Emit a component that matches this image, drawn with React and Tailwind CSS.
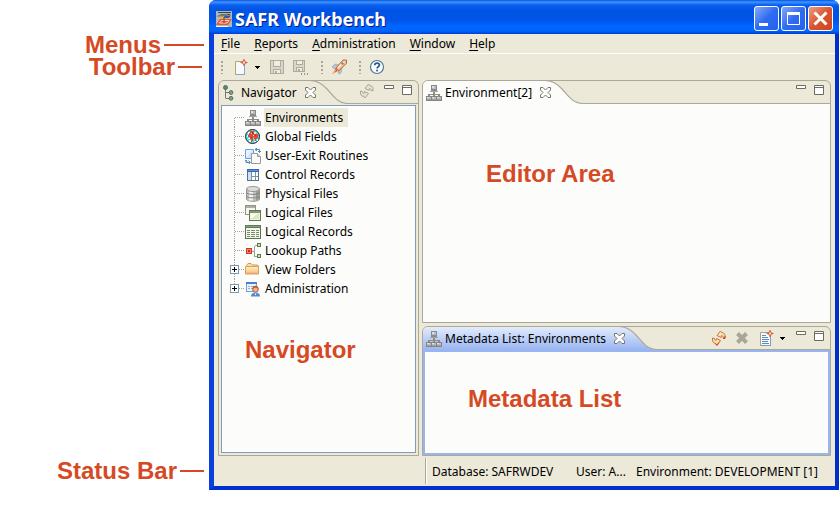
import React from "react";

const UI = "font-['Noto_Sans','DejaVu_Sans',sans-serif] text-[12px] leading-[19px] text-black";
const NOTE = "font-['Liberation_Sans',Arial,sans-serif] text-[24px] leading-[22px] font-bold text-[#d54a25]";

function Svg({ children, className = "", w = 16, h = 16 }) {
  return (
    <svg width={w} height={h} viewBox={`0 0 ${w} ${h}`} className={`block shrink-0 ${className}`} fill="none" aria-hidden="true">
      {children}
    </svg>
  );
}

/* ---------- icons ---------- */

const AppIcon = () => (
  <Svg>
    <rect width="16" height="16" fill="#b4b5ba" />
    <path d="M2 1.500h13M5 3.500h9" stroke="#3f434a" />
    <path d="M0 5.500l4-2 9-1-3 3z" fill="#6f7f73" />
    <path d="M2 7.500l10-3M3 9l12-4" stroke="#e8b93c" />
    <path d="M9 4.500h6l-2 2.500H7z" fill="#35599c" />
    <path d="M0 14l4-6h12l-4 6z" fill="#e25a33" />
    <path d="M3.500 12l2-2.500h7.500l-2 2.500z" stroke="#fbd7c5" />
    <path d="M8 7v5" stroke="#a8231a" />
    <path d="M0 15.500h12" stroke="#f6f6f6" />
  </Svg>
);

const NetworkIcon = () => (
  <Svg>
    <g shapeRendering="crispEdges">
      <rect x="5" y="0" width="6" height="6" fill="#8b8b86" />
      <rect x="6" y="1" width="4" height="3" fill="#b7bbcd" />
      <rect x="6" y="1" width="2" height="2" fill="#d9dcea" />
      <rect x="4" y="6" width="8" height="1" fill="#a3a29c" />
      <rect x="7" y="7" width="2" height="2" fill="#8d8d86" />
      <rect x="2" y="9" width="12" height="1" fill="#8d8d86" />
      <path d="M2 10h2v1H2zM7 10h2v1H7zM12 10h2v1h-2z" fill="#8d8d86" />
      <rect x="0" y="11" width="16" height="5" fill="#85857f" />
      <path d="M1 12h4v2H1zM6 12h4v2H6zM11 12h4v2h-4z" fill="#bcbcbe" />
      <path d="M1 12h2v1H1zM6 12h2v1H6zM11 12h2v1h-2z" fill="#e2e2e4" />
      <path d="M1 14h4v1H1zM6 14h4v1H6zM11 14h4v1h-4z" fill="#a2a29e" />
    </g>
  </Svg>
);

const GlobeIcon = () => (
  <Svg>
    <circle cx="7.500" cy="7.500" r="7" fill="#54d8ea" stroke="#222" />
    <g shapeRendering="crispEdges">
      <path d="M3 3h2v2H3zM2 6h1v2H2zM3 9h2v1H3zM4 11h2v2H4zM9 12h2v1H9zM12 10h1v2h-1zM10 10h1v1h-1z" fill="#e6fdff" />
      <path d="M5 2h4v1h2v2h2v4h-1v1h-1v2h-1v-2H9V8H8v4H7v1H6v-3H5V8H3V6h1V4h1z" fill="#e2482c" />
      <path d="M9 3h2v2H9zM6 4h1v1H6zM8 6h1v1H8z" fill="#ffd4c2" />
      <path d="M7 3h1v2H7zM10 6h1v1h-1zM6 8h1v1H6z" fill="#9b2a20" />
    </g>
  </Svg>
);

const RoutineIcon = () => (
  <Svg>
    <path d="M.500 1.500h8v9h-8z" fill="#cfe3ff" stroke="#6f9ddd" />
    <path d="M1 2h6l-5 7H1z" fill="#e9f3ff" />
    <path d="M6.500 5.500h6l3 3v7h-9z" fill="#fafafa" stroke="#9b9b94" />
    <path d="M12.500 5.500v3h3" stroke="#9b9b94" fill="#ddd" />
    <path d="M10 1.500h4.500V4M12 0l-2 1.500L12 3M13 3l1.500 1.500L16 3" stroke="#4f88b5" />
    <path d="M1 12.500v2h4M3.500 12.500L5.500 14.500l-2 1.500M-.5 13.500l1.500-1.500 1.500 1.500" stroke="#4f88b5" />
  </Svg>
);

const ControlIcon = () => (
  <Svg>
    <g shapeRendering="crispEdges">
      <rect x="2.500" y="2.500" width="11" height="11" fill="#fff" stroke="#56728f" />
      <rect x="2" y="2" width="12" height="3" fill="#3569c0" />
      <rect x="3" y="3" width="10" height="1" fill="#5f8fdc" />
      <path d="M3 5h3v8H3z" fill="#cfe0f6" />
      <path d="M6.500 5v8M10.500 5v8" stroke="#7d93a0" />
      <path d="M7 9.500h6" stroke="#7d93a0" />
    </g>
  </Svg>
);

const DatabaseIcon = () => (
  <Svg>
    <path d="M1.500 3v10c0 3 13 3 13 0V3" fill="#c0c0be" stroke="#96968f" />
    <path d="M4 4v10.500h4V5z" fill="#f0f0ee" />
    <path d="M11 4v10.500l3-1V3z" fill="#9c9c97" />
    <path d="M1.500 6.500c0 2.500 13 2.500 13 0M1.500 10c0 2.500 13 2.500 13 0" stroke="#83837e" />
    <ellipse cx="8" cy="3" rx="6.500" ry="2.500" fill="#dcdcda" stroke="#96968f" />
  </Svg>
);

const LogicalFilesIcon = () => (
  <Svg>
    <g shapeRendering="crispEdges">
      <rect x=".5" y=".5" width="10" height="9" fill="#f5f6ef" stroke="#8f948a" />
      <path d="M1 1h9v2H1z" fill="#a9b19f" />
      <rect x="4.500" y="5.500" width="11" height="10" fill="#eef3df" stroke="#66785b" />
      <path d="M5 6h10v2H5z" fill="#7f9a6c" />
      <path d="M6 9h8v5H6z" fill="#dbe8c2" />
      <path d="M6 9h6v1h-2v1H9v1H8v1H6z" fill="#fafdf2" />
    </g>
  </Svg>
);

const LogicalRecordsIcon = () => (
  <Svg>
    <g shapeRendering="crispEdges">
      <rect x=".5" y="1.500" width="15" height="13" fill="#f4f7ec" stroke="#5d7158" />
      <path d="M0 1h16v3H0z" fill="#5f7a5c" />
      <path d="M1 2h14v1H1z" fill="#84a07d" />
      <path d="M2 6.500h3M6 6.500h4M11 6.500h3M2 8.500h3M6 8.500h4M11 8.500h3M2 10.500h3M6 10.500h4M11 10.500h3M2 12.500h3M6 12.500h4M11 12.500h3" stroke="#7a8c66" />
    </g>
  </Svg>
);

const LookupIcon = () => (
  <Svg>
    <g shapeRendering="crispEdges">
      <rect x="1.500" y="5.500" width="5" height="5" fill="#f08868" stroke="#cc3a24" />
      <rect x="3" y="7" width="2" height="2" fill="#c52a1c" />
      <path d="M7 8.500h3M9.500 3v11M10 2.500h2M10 13.500h2" stroke="#a0a09a" />
      <rect x="12.500" y=".5" width="3" height="3" fill="#cfe0b8" stroke="#5e7a4c" />
      <rect x="12.500" y="11.500" width="3" height="3" fill="#cfe0b8" stroke="#5e7a4c" />
    </g>
  </Svg>
);

const FolderIcon = () => (
  <Svg>
    <defs>
      <linearGradient id="folder" x1="0" y1="0" x2="0" y2="1">
        <stop offset="0" stopColor="#fdeebc" />
        <stop offset=".6" stopColor="#f9d596" />
        <stop offset="1" stopColor="#f2a07a" />
      </linearGradient>
    </defs>
    <path d="M1.500 11.500v-8l1.500-2h3l1.500 1.500h5l1 1v7.500z" fill="#f8dfa0" stroke="#c99c55" />
    <path d="M.500 4.500h13v7.500h-13z" fill="url(#folder)" stroke="#d2a266" />
  </Svg>
);

const AdminIcon = () => (
  <Svg>
    <g shapeRendering="crispEdges">
      <rect x="1.500" y="1.500" width="10" height="9" fill="#eaf2fd" stroke="#7ba3da" />
      <path d="M1 1h11v2H1z" fill="#4b80cd" />
      <path d="M3 5.500h2M6 5.500h3M3 7.500h2M6 7.500h2" stroke="#8db1e2" />
    </g>
    <path d="M6 15.500c0-3 2-4 4.500-4s4.500 1 4.500 4z" fill="#4a8bd4" />
    <path d="M9.500 12.500l1 2 1-2z" fill="#fff" />
    <circle cx="10.500" cy="8.500" r="2.800" fill="#f3b18c" stroke="#b05a38" />
    <path d="M7.300 8c0-4.500 6.400-4.500 6.400 0l-2-1.300H9.300z" fill="#bd5a30" />
  </Svg>
);

const HierarchyIcon = () => (
  <Svg>
    <path d="M3.500 4v9.500M4 7.500h4M4 13.500h4" stroke="#777" />
    <circle cx="3.500" cy="2.500" r="2" fill="#5d8a66" stroke="#5a6b5e" />
    <circle cx="9" cy="7.500" r="1.900" fill="#7fa583" stroke="#5a6b5e" />
    <circle cx="9" cy="13.300" r="1.900" fill="#7fa583" stroke="#5a6b5e" />
  </Svg>
);

const Spark = ({ x, y }) => (
  <g transform={`translate(${x} ${y})`}>
    <path d="M3.500 0l1 2.500 2.500 1-2.500 1-1 2.500-1-2.500L0 3.500l2.500-1z" fill="#d2553a" stroke="#d2553a" strokeWidth=".5" />
    <path d="M2.500 2.500h2v2h-2z" fill="#fbe6c2" />
  </g>
);

const NewIcon = () => (
  <Svg>
    <path d="M2.500 2.500h7l2 2v11h-9z" fill="#f7fafd" stroke="#b3a66c" />
    <path d="M11.500 5v10.500h-9" stroke="#89a6bf" />
    <Spark x={7.5} y={0} />
  </Svg>
);

const SaveIcon = ({ more }) => (
  <Svg>
    <g shapeRendering="crispEdges">
      <path d={more ? "M1.500 1.500h11v11h-11z" : "M1.500 1.500h13v13h-13z"} fill="#d9d7ca" stroke="#aeab9c" />
      <path d={more ? "M4.500 1.500h6v4h-6zM4.500 8.500h6v4h-6z" : "M4.500 1.500h7v6h-7zM4.500 10.500h7v4h-7z"} fill="#efeee6" stroke="#aeab9c" />
      <path d={more ? "M6 10h2v2H6z" : "M6 12h2v2H6z"} fill="#aeab9c" />
      {more && <path d="M9 14h1v2H9zM12 14h1v2h-1zM15 14h1v2h-1z" fill="#9b988a" />}
    </g>
  </Svg>
);

const LaunchIcon = () => (
  <Svg>
    <path d="M1 8l3-3 4 1-4 4zM7 13l4-4-1 5-2 1z" fill="#b4c6d6" stroke="#8a98a4" strokeWidth=".6" />
    <path d="M5 9l7-8 3.500 0 0 3.500L7.500 12z" fill="#f0bb8c" stroke="#bb6533" strokeWidth=".9" />
    <path d="M7 9l6.500-6.500" stroke="#fdf1d0" strokeWidth="1.400" />
    <path d="M5 9l-4 6 6-3z" fill="#e2643a" />
    <path d="M4.500 11l-2.500 3" stroke="#ffd873" />
    <circle cx="11.500" cy="4.500" r="1.200" fill="#6f8aa6" />
  </Svg>
);

const HelpIcon = () => (
  <Svg>
    <circle cx="8" cy="8" r="6.500" fill="#fbfdff" stroke="#55749a" strokeWidth="1.200" />
    <path d="M5.800 6.300c0-3 4.600-2.800 4.600-.2 0 1.800-2.300 1.700-2.300 3.400" stroke="#2f5d93" strokeWidth="1.800" />
    <path d="M7.200 10.700h1.900v1.700H7.200z" fill="#2f5d93" />
  </Svg>
);

const RefreshIcon = ({ muted }) => {
  const line = muted ? "#aaa798" : "#c8753f";
  const fill = muted ? "#e4e1d2" : "#fbe3ad";
  return (
    <Svg>
      <path d="M6 5.500L9.500 1l1 1.500c3 0 4 2.500 3.500 5.500l-2-.5c0-1.500-.7-2-1.500-2l-.5 2z" fill={fill} stroke={line} />
      <path d="M9.500 10.500L6 15l-1-1.500c-3 0-4-2.500-3.500-5.500l2 .5c0 1.500.700 2 1.500 2l.500-2z" fill={fill} stroke={line} />
      {!muted && <path d="M12 8.500h2V6M4.500 14l1.500 1.500 2-3" stroke="#d93a1e" />}
    </Svg>
  );
};

const DeleteIcon = () => (
  <Svg>
    <path d="M3.500 3.500l9 9M12.500 3.500l-9 9" stroke="#a9a697" strokeWidth="4" />
  </Svg>
);

const NewItemIcon = () => (
  <Svg>
    <path d="M1.500 2.500h10v13h-10z" fill="#f5faff" stroke="#a9a577" />
    <path d="M11.500 6v9.500h-10" stroke="#7f9cc0" />
    <path d="M3 5.500h4M3 7.500h6M3 9.500h7M3 11.500h6M3 13.500h7" stroke="#5b8ac2" />
    <Spark x={7.5} y={0} />
  </Svg>
);

const CloseIcon = () => (
  <Svg w={11} h={11}>
    <path d="M.5.5h2.500L5.500 3 8 .5h2.500V3L8 5.500 10.500 8v2.500H8L5.500 8 3 10.500H.5V8L3 5.500.5 3z" fill="#fdfdfb" stroke="#77766a" />
  </Svg>
);

const MinIcon = () => (
  <Svg w={10} h={10}>
    <path d="M.5.500h9v3h-9z" fill="#fff" stroke="#6c6b60" />
  </Svg>
);

const MaxIcon = () => (
  <Svg w={10} h={10}>
    <path d="M.5.500h9v9h-9zM.5 2.500h9" fill="#fff" stroke="#6c6b60" />
  </Svg>
);

const DropArrow = () => (
  <Svg w={5} h={3}>
    <path d="M0 0h5v1H4v1H3v1H2V2H1V1H0z" fill="#000" shapeRendering="crispEdges" />
  </Svg>
);

/* ---------- pieces ---------- */

function IconButton({ label, children }) {
  return (
    <button type="button" aria-label={label} title={label} className="flex shrink-0 items-center">
      {children}
    </button>
  );
}

function Grip() {
  return (
    <Svg w={2} h={13}>
      <path d="M1 0v13" stroke="#a9a695" strokeWidth="2" strokeDasharray="2 2" />
    </Svg>
  );
}

function TitleButton({ label, danger, children }) {
  return (
    <button
      type="button"
      aria-label={label}
      className={`flex h-[25px] w-[25px] items-center justify-center rounded-[3px] border border-white ${
        danger ? "bg-linear-to-br from-[#e99a80] via-[#d9552f] to-[#d0441c]" : "bg-linear-to-br from-[#86a8f8] via-[#2f6bf2] to-[#2560ee]"
      }`}
    >
      <Svg w={17} h={17}>{children}</Svg>
    </button>
  );
}

function TabHeader({ icon, title, fill, barClass, tools }) {
  return (
    <div className="flex h-[23px] shrink-0">
      <div className={`flex items-center rounded-tl-[5px] pl-[3px] ${barClass}`}>
        {icon}
        <span className="mr-2 ml-[3px] whitespace-nowrap">{title}</span>
        <span className="relative z-10 flex">
          <IconButton label={`Close ${title}`}>
            <CloseIcon />
          </IconButton>
        </span>
      </div>
      <Svg w={38} h={23} className="-ml-1.5">
        <defs>
          <linearGradient id="activeTab" x1="0" y1="0" x2="0" y2="1">
            <stop offset="0" stopColor="#e3ecfc" />
            <stop offset="1" stopColor="#99b5f1" />
          </linearGradient>
        </defs>
        <path d="M0 0C8 0 12 3 17 8S27 22.500 38 22.500V23H0z" fill={fill} />
        <path d="M0-.5C8 0 12 3 17 8S27 22.500 38 22.500" stroke="#aca899" strokeWidth="1.200" />
      </Svg>
      <div className="flex flex-1 items-start justify-end border-b border-[#aca899] pr-[6px]">
        {tools}
        <div className="mt-1 flex gap-2">
          <IconButton label="Minimize"><MinIcon /></IconButton>
          <IconButton label="Maximize"><MaxIcon /></IconButton>
        </div>
      </div>
    </div>
  );
}

const TREE = [
  { name: "Environments", Icon: NetworkIcon, selected: true },
  { name: "Global Fields", Icon: GlobeIcon },
  { name: "User-Exit Routines", Icon: RoutineIcon },
  { name: "Control Records", Icon: ControlIcon },
  { name: "Physical Files", Icon: DatabaseIcon },
  { name: "Logical Files", Icon: LogicalFilesIcon },
  { name: "Logical Records", Icon: LogicalRecordsIcon },
  { name: "Lookup Paths", Icon: LookupIcon },
  { name: "View Folders", Icon: FolderIcon, expandable: true },
  { name: "Administration", Icon: AdminIcon, expandable: true },
];

function Branch({ first, last, expandable }) {
  return (
    <Svg w={16} h={19}>
      <path d={`M5.500 ${first ? 10 : 0}V${last ? 10 : 19}M6 9.500h10`} stroke="#a5a39a" strokeDasharray="1 1" shapeRendering="crispEdges" />
      {expandable && (
        <g shapeRendering="crispEdges">
          <path d="M1.500 5.500h8v8h-8z" fill="#fff" stroke="#7b98b5" />
          <path d="M3 9.500h5M5.500 7v5" stroke="#000" />
        </g>
      )}
    </Svg>
  );
}

function Tree() {
  return (
    <ul className="pt-[2px] pl-[7px]">
      {TREE.map(({ name, Icon, selected, expandable }, i) => (
        <li key={name} className="flex h-[19px] items-center">
          <Branch first={i === 0} last={i === TREE.length - 1} expandable={expandable} />
          <Icon />
          <span className={`ml-[3px] pr-[5px] pl-px whitespace-nowrap ${selected ? "bg-[#ece9d8]" : ""}`}>{name}</span>
        </li>
      ))}
    </ul>
  );
}

const MENUS = ["File", "Reports", "Administration", "Window", "Help"];

function Callout({ children, lineClass, className = "" }) {
  return (
    <div className={`flex items-center justify-end gap-[3px] ${className}`}>
      <span className="whitespace-nowrap">{children}</span>
      <span className={`h-[2px] bg-[#d54a25] ${lineClass}`} />
    </div>
  );
}

export default function App() {
  return (
    <div className="flex min-h-screen bg-white pr-px pb-10">
      <aside className={`flex w-[209px] shrink-0 flex-col pt-[34px] pb-2 ${NOTE}`}>
        <Callout className="pr-[5px]" lineClass="w-10">Menus</Callout>
        <Callout className="pr-[7px]" lineClass="w-6">Toolbar</Callout>
        <Callout className="mt-auto pr-[5px]" lineClass="w-6">Status Bar</Callout>
      </aside>

      <div className={`flex min-w-0 flex-1 flex-col rounded-t-[7px] bg-[linear-gradient(to_right,#0019cf_0px,#0b4be6_5px,#0b4be6_calc(100%-4px),#0012a0_100%)] ${UI}`}>
        <header className="flex h-[34px] shrink-0 items-center rounded-t-[7px] bg-[linear-gradient(to_bottom,#0a52dd_0px,#3d95ff_2px,#0a5ff0_5px,#0054e3_10px,#0055e8_20px,#0066ff_26px,#0064fa_31px,#003dd0_34px)] pt-[3px] pr-[6px] pl-[7px]">
          <AppIcon />
          <h1 className="ml-[3px] flex-1 font-['Noto_Sans','DejaVu_Sans',sans-serif] text-[18px] leading-6 font-bold whitespace-nowrap text-white [text-shadow:1px_1px_0_#0a1883]">
            SAFR Workbench
          </h1>
          <div className="flex gap-[2px]">
            <TitleButton label="Minimize window">
              <path d="M1 13h9v3H1z" fill="#fff" />
            </TitleButton>
            <TitleButton label="Maximize window">
              <path d="M2.500 3.500h12v11h-12z" stroke="#fff" />
              <path d="M2 2h13v3H2z" fill="#fff" />
            </TitleButton>
            <TitleButton label="Close window" danger>
              <path d="M2.500 2.500l12 12M14.500 2.500l-12 12" stroke="#fff" strokeWidth="3" />
            </TitleButton>
          </div>
        </header>

        <div className="flex flex-1 flex-col border-r-4 border-b-4 border-l-5 border-r-[#0030c8] border-b-[#0030d0] border-l-[#0b3fe0] bg-[#ece9d8]">
          <nav className="flex h-5 items-center gap-[14px] border-b border-white pl-[7px]">
            {MENUS.map((m) => (
              <button key={m} type="button">
                <span className="underline underline-offset-2">{m[0]}</span>
                {m.slice(1)}
              </button>
            ))}
          </nav>

          <div className="flex h-[26px] items-center pl-[7px]">
            <Grip />
            <div className="ml-[10px] flex items-center">
              <IconButton label="New"><NewIcon /></IconButton>
              <span className="ml-[6px]"><IconButton label="New menu"><DropArrow /></IconButton></span>
            </div>
            <div className="mr-[13px] ml-[9px] flex gap-[7px]">
              <IconButton label="Save"><SaveIcon /></IconButton>
              <IconButton label="Save As"><SaveIcon more /></IconButton>
            </div>
            <Grip />
            <div className="mr-[12px] ml-2">
              <IconButton label="Launch"><LaunchIcon /></IconButton>
            </div>
            <Grip />
            <div className="ml-2">
              <IconButton label="Help"><HelpIcon /></IconButton>
            </div>
          </div>

          <main className="flex flex-1 gap-[3px] px-1">
            <section className="flex w-[201px] shrink-0 flex-col rounded-t-[6px] border border-[#aca899]">
              <TabHeader
                icon={<HierarchyIcon />}
                title="Navigator"
                fill="#ece9d8"
                barClass=""
                tools={<div className="mt-[2px] mr-[9px]"><IconButton label="Refresh"><RefreshIcon muted /></IconButton></div>}
              />
              <div className="mx-[2px] mt-px mb-[2px] flex-1 border border-[#7f9db9] bg-[#fcfdfb]">
                <Tree />
                <p className={`mt-[41px] pl-[23px] ${NOTE}`}>Navigator</p>
              </div>
            </section>

            <div className="flex min-w-0 flex-1 flex-col gap-[3px]">
              <section className="flex flex-[244] flex-col rounded-t-[6px] border border-[#aca899]">
                <TabHeader icon={<NetworkIcon />} title="Environment[2]" fill="#fcfdfb" barClass="bg-[#fcfdfb]" />
                <div className="flex-1 bg-[#fcfdfb] pt-[59px] pl-[63px]">
                  <p className={NOTE}>Editor Area</p>
                </div>
              </section>

              <section className="flex flex-[129] flex-col rounded-t-[6px] border border-[#aca899]">
                <TabHeader
                  icon={<NetworkIcon />}
                  title="Metadata List: Environments"
                  fill="url(#activeTab)"
                  barClass="bg-linear-to-b from-[#e3ecfc] to-[#99b5f1]"
                  tools={
                    <div className="mt-[3px] mr-[11px] flex items-center">
                      <IconButton label="Refresh list"><RefreshIcon /></IconButton>
                      <span className="ml-[7px]"><IconButton label="Delete"><DeleteIcon /></IconButton></span>
                      <span className="ml-[9px]"><IconButton label="New item"><NewItemIcon /></IconButton></span>
                      <span className="ml-[5px]"><IconButton label="New item menu"><DropArrow /></IconButton></span>
                    </div>
                  }
                />
                <div className="flex-1 border-2 border-[#99b5f1] bg-[#fcfdfb] pt-[36px] pl-[43px]">
                  <p className={NOTE}>Metadata List</p>
                </div>
              </section>
            </div>
          </main>

          <footer className="flex h-[30px] shrink-0 items-center pl-[211px]">
            <div className="flex h-[26px] items-center border-l border-[#aca899] pl-[6px] whitespace-nowrap shadow-[inset_1px_0_0_#fff]">
              <span className="w-36">Database: SAFRWDEV</span>
              <span className="w-[60px]">User: A...</span>
              <span>Environment: DEVELOPMENT [1]</span>
            </div>
          </footer>
        </div>
      </div>
    </div>
  );
}
